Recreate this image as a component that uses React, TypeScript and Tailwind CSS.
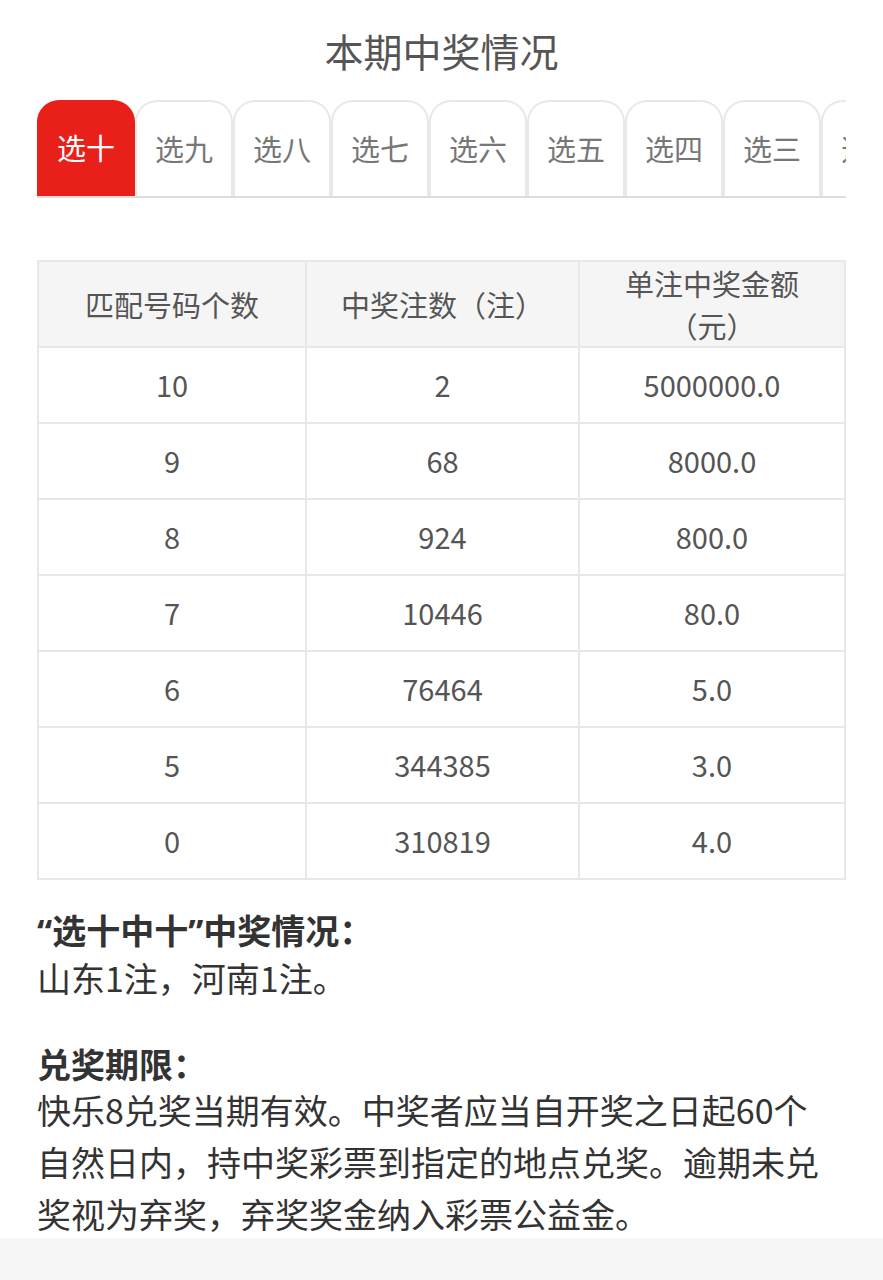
import React from 'react';

const tabs = ['选十', '选九', '选八', '选七', '选六', '选五', '选四', '选三', '选二'];

const rows: [string, string, string][] = [
  ['10', '2', '5000000.0'],
  ['9', '68', '8000.0'],
  ['8', '924', '800.0'],
  ['7', '10446', '80.0'],
  ['6', '76464', '5.0'],
  ['5', '344385', '3.0'],
  ['0', '310819', '4.0'],
];

const font = { fontFamily: '"Noto Sans CJK SC", "Noto Sans", sans-serif' };
const latinFirst = { fontFamily: '"Noto Sans", "Noto Sans CJK SC", sans-serif' };

const App: React.FC = () => {
  return (
    <div className="min-h-[1280px] bg-[#f7f7f7]" style={font}>
      <div className="bg-white px-[37px] pt-[26px]">
        <h1 className="text-center text-[39px] leading-[48px] text-[#555] font-normal">本期中奖情况</h1>

        {/* tabs, the last one runs off the edge */}
        <div className="mt-[26px] flex overflow-hidden border-b-2 border-[#dcdcdc]">
          {tabs.map((t, i) => (
            <div
              key={t}
              className={
                i === 0
                  ? 'flex h-[96px] w-[98px] shrink-0 items-center justify-center rounded-t-[22px] bg-[#e91f1a] text-[29px] text-white'
                  : 'flex h-[96px] w-[98px] shrink-0 items-center justify-center rounded-t-[22px] border-2 border-b-0 border-[#e8e8e8] bg-white text-[29px] text-[#777]'
              }
            >
              {t}
            </div>
          ))}
        </div>

        {/* prize table */}
        <table className="mt-[62px] w-full table-fixed border-collapse border-2 border-[#e8e8e8] text-[29px] text-[#555]">
          <colgroup>
            <col className="w-[268px]" />
            <col className="w-[273px]" />
            <col />
          </colgroup>
          <thead>
            <tr className="h-[86px] bg-[#f5f5f5]">
              <th className="border-2 border-[#e8e8e8] font-normal leading-[42px]">匹配号码个数</th>
              <th className="border-2 border-[#e8e8e8] font-normal leading-[42px]">中奖注数（注）</th>
              <th className="border-2 border-[#e8e8e8] px-6 font-normal leading-[42px]">单注中奖金额（元）</th>
            </tr>
          </thead>
          <tbody>
            {rows.map((r) => (
              <tr key={r[0]} className="h-[76px]">
                {r.map((c, j) => (
                  <td key={j} className="border-2 border-[#e8e8e8] text-center">
                    {c}
                  </td>
                ))}
              </tr>
            ))}
          </tbody>
        </table>

        <div className="mt-[28px] text-[34px] text-[#333]">
          <div className="font-bold leading-[46px]" style={latinFirst}>“选十中十”中奖情况：</div>
          <div className="leading-[48px]">山东1注，河南1注。</div>
        </div>

        <div className="mt-[42px] text-[34px] text-[#333]">
          <div className="font-bold leading-[40px]">兑奖期限：</div>
          <p className="h-[154px] leading-[52px]">
            快乐8兑奖当期有效。中奖者应当自开奖之日起60个
            <br />
            自然日内，持中奖彩票到指定的地点兑奖。逾期未兑
            <br />
            奖视为弃奖，弃奖奖金纳入彩票公益金。
          </p>
        </div>
      </div>
    </div>
  );
};

export default App;
